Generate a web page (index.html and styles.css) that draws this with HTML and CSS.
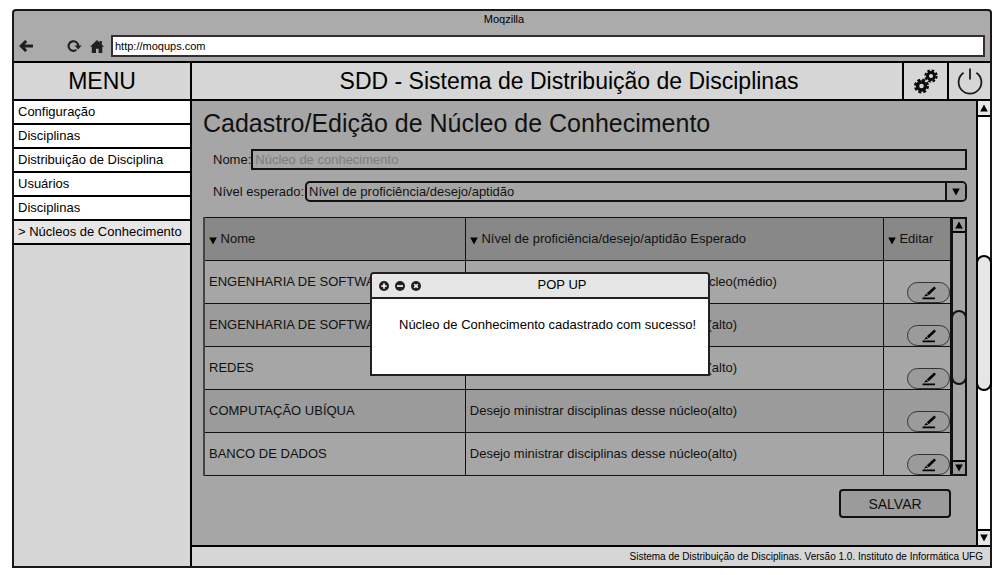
FILE: index.html
```html
<!DOCTYPE html>
<html lang="pt-BR">
<head>
<meta charset="utf-8">
<meta name="viewport" content="width=device-width, initial-scale=1">
<title>SDD - Sistema de Distribuição de Disciplinas</title>
<link rel="stylesheet" href="styles.css">
</head>
<body>
<svg class="defs" aria-hidden="true">
  <symbol id="up" viewBox="0 0 8 8"><path d="M4 0.5 7.8 7.5H0.2z"/></symbol>
  <symbol id="down" viewBox="0 0 8 8"><path d="M0.2 0.5H7.8L4 7.5z"/></symbol>
  <symbol id="pen" viewBox="0 0 14 14"><path d="M12.2 0.4 14 2.2 6.8 9.2 4.8 7.2zM4.2 7.8 6.2 9.8 2 10.6zM0.5 11.5H13V13.3H0.5z"/></symbol>
</svg>
<div class="window">
  <div class="chrome">
    <div class="chrome-title">Moqzilla</div>
    <div class="toolbar">
      <button class="icon-button back" type="button" aria-label="Voltar">
        <svg width="14" height="12" viewBox="0 0 14 12" fill="none" stroke="#231f20" stroke-width="2.9"><path d="M2 6H14M7.2 0.9 2 6 7.2 11.1"/></svg>
      </button>
      <button class="icon-button" type="button" aria-label="Recarregar">
        <svg width="15" height="12" viewBox="0 0 15 12"><path d="M9.4 9.8A4.8 4.8 0 1 1 11.2 6" fill="none" stroke="#231f20" stroke-width="2.1"/><path d="M7.6 5.4H14.6L11.1 9.6z" fill="#231f20"/></svg>
      </button>
      <button class="icon-button" type="button" aria-label="Página inicial">
        <svg width="14" height="13" viewBox="0 0 14 13" fill="#231f20"><path d="M7 0 9.6 2.4V1H11.8V4.4L14 6.8H12.3V13H8.6V8.8H6V13H1.8V6.8H0z"/></svg>
      </button>
      <input class="address" type="text" aria-label="Endereço" value="http://moqups.com">
    </div>
  </div>
  <div class="app">
    <aside class="sidebar">
      <h2 class="heading">MENU</h2>
      <nav class="menu">
        <a href="#">Configuração</a>
        <a href="#">Disciplinas</a>
        <a href="#">Distribuição de Disciplina</a>
        <a href="#">Usuários</a>
        <a href="#">Disciplinas</a>
        <a href="#" class="active" aria-current="page">&gt; Núcleos de Conhecimento</a>
      </nav>
    </aside>
    <div class="main">
      <header class="topbar">
        <h1 class="heading">SDD - Sistema de Distribuição de Disciplinas</h1>
        <button class="top-action" type="button" aria-label="Configurações">
          <svg width="24" height="25" viewBox="0 0 24 25" fill="none" stroke="#0a0a0a">
            <circle cx="7.5" cy="17" r="4" stroke-width="3.4"/>
            <circle cx="7.5" cy="17" r="6.3" stroke-width="2.4" stroke-dasharray="2.9 2.05"/>
            <circle cx="17" cy="7" r="3.5" stroke-width="2.8"/>
            <circle cx="17" cy="7" r="5.5" stroke-width="2.3" stroke-dasharray="2.5 1.82"/>
          </svg>
        </button>
        <button class="top-action power" type="button" aria-label="Sair">
          <svg width="26" height="27" viewBox="0 0 26 27" fill="none" stroke="#1c1c1c" stroke-width="1.8"><path d="M13 0.5V11.5M6.6 4.8A11.4 11.4 0 1 0 19.4 4.8"/></svg>
        </button>
      </header>
      <div class="workspace">
        <main class="content">
          <h2 class="page-title">Cadastro/Edição de Núcleo de Conhecimento</h2>
          <form class="form">
            <div class="field">
              <label for="nome">Nome:</label>
              <input id="nome" type="text" placeholder="Núcleo de conhecimento">
            </div>
            <div class="field level">
              <label for="nivel">Nível esperado:</label>
              <div class="select-box">
                <select id="nivel"><option>Nível de proficiência/desejo/aptidão</option></select>
                <span class="select-arrow"><svg width="8" height="8"><use href="#down"/></svg></span>
              </div>
            </div>
            <div class="grid">
              <table>
                <colgroup><col class="col-name"><col class="col-level"><col class="col-edit"></colgroup>
                <thead>
                  <tr>
                    <th scope="col"><svg width="8" height="8"><use href="#down"/></svg> Nome</th>
                    <th scope="col"><svg width="8" height="8"><use href="#down"/></svg> Nível de proficiência/desejo/aptidão Esperado</th>
                    <th scope="col"><svg width="8" height="8"><use href="#down"/></svg> Editar</th>
                  </tr>
                </thead>
                <tbody>
                  <tr><td>ENGENHARIA DE SOFTWARE</td><td>Não desejo ministrar disciplinas desse núcleo(médio)</td><td class="edit"><button type="button" aria-label="Editar"><svg width="14" height="14"><use href="#pen"/></svg></button></td></tr>
                  <tr><td>ENGENHARIA DE SOFTWARE</td><td>Desejo ministrar disciplinas desse núcleo(alto)</td><td class="edit"><button type="button" aria-label="Editar"><svg width="14" height="14"><use href="#pen"/></svg></button></td></tr>
                  <tr><td>REDES</td><td>Desejo ministrar disciplinas desse núcleo(alto)</td><td class="edit"><button type="button" aria-label="Editar"><svg width="14" height="14"><use href="#pen"/></svg></button></td></tr>
                  <tr><td>COMPUTAÇÃO UBÍQUA</td><td>Desejo ministrar disciplinas desse núcleo(alto)</td><td class="edit"><button type="button" aria-label="Editar"><svg width="14" height="14"><use href="#pen"/></svg></button></td></tr>
                  <tr><td>BANCO DE DADOS</td><td>Desejo ministrar disciplinas desse núcleo(alto)</td><td class="edit"><button type="button" aria-label="Editar"><svg width="14" height="14"><use href="#pen"/></svg></button></td></tr>
                </tbody>
              </table>
              <div class="scroll dimmed">
                <button type="button" aria-label="Rolar tabela para cima"><svg width="8" height="8"><use href="#up"/></svg></button>
                <div class="track"><div class="thumb"></div></div>
                <button type="button" aria-label="Rolar tabela para baixo"><svg width="8" height="8"><use href="#down"/></svg></button>
              </div>
            </div>
            <button class="save" type="button">SALVAR</button>
          </form>
        </main>
        <div class="scroll page-scroll">
          <button type="button" aria-label="Rolar página para cima"><svg width="8" height="8"><use href="#up"/></svg></button>
          <div class="track"><div class="thumb"></div></div>
          <button type="button" aria-label="Rolar página para baixo"><svg width="8" height="8"><use href="#down"/></svg></button>
        </div>
        <dialog class="popup" open aria-labelledby="popup-title">
          <div class="popup-bar">
            <div class="popup-controls">
              <button type="button" aria-label="Maximizar"><svg width="10" height="10" viewBox="0 0 10 10"><circle cx="5" cy="5" r="5" fill="#231f20"/><path d="M5 2.3V7.7M2.3 5H7.7" stroke="#fff" stroke-width="1.6"/></svg></button>
              <button type="button" aria-label="Minimizar"><svg width="10" height="10" viewBox="0 0 10 10"><circle cx="5" cy="5" r="5" fill="#231f20"/><path d="M2 5H8" stroke="#fff" stroke-width="1.6"/></svg></button>
              <button type="button" aria-label="Fechar"><svg width="10" height="10" viewBox="0 0 10 10"><circle cx="5" cy="5" r="5" fill="#231f20"/><path d="M3.2 3.2 6.8 6.8M6.8 3.2 3.2 6.8" stroke="#fff" stroke-width="1.6"/></svg></button>
            </div>
            <h3 id="popup-title">POP UP</h3>
          </div>
          <p>Núcleo de Conhecimento cadastrado com sucesso!</p>
        </dialog>
      </div>
      <footer class="footer">Sistema de Distribuição de Disciplinas. Versão 1.0. Instituto de Informática UFG</footer>
    </div>
  </div>
</div>
</body>
</html>
```
FILE: styles.css
```css
* { box-sizing: border-box; }

body {
  margin: 0;
  padding: 9px 12px 7px;
  min-height: 100vh;
  display: flex;
  background: #fff;
  color: #000;
  font: 13px/16px "Liberation Sans", Arial, sans-serif;
}

button, input, select { font: inherit; color: inherit; margin: 0; }
button { display: grid; place-items: center; padding: 0; border: 0; background: none; }
svg { display: block; }
h1, h2, h3, p { margin: 0; font-weight: normal; }
.defs { position: absolute; width: 0; height: 0; }

.window {
  flex: 1;
  min-width: 0;
  display: flex;
  flex-direction: column;
  border: 2px solid #1a1718;
  border-radius: 4px 4px 0 0;
  background: #ababab;
}

.chrome-title { font-size: 11px; line-height: 16px; text-align: center; padding-left: 4px; }
.toolbar { display: flex; align-items: center; padding: 8px 5px 4px; }
.icon-button { margin-right: 7px; }
.icon-button.back { margin-right: 34px; }
.icon-button:nth-child(2) { margin-right: 8px; }
.address {
  flex: 1;
  min-width: 0;
  height: 22px;
  padding: 0 2px;
  border: 2px solid #352d30;
  border-radius: 0;
  background: #fff;
  font-size: 11px;
}

.app { flex: 1; display: grid; grid-template-columns: 178px minmax(0, 1fr); border-top: 2px solid #000; }
.sidebar { border-right: 2px solid #000; background: #d6d6d6; }
.heading { font-size: 23px; line-height: 36px; text-align: center; }
.sidebar .heading { border-bottom: 2px solid #000; }
.menu { display: grid; }
.menu a {
  padding: 2px 4px;
  line-height: 18px;
  border-bottom: 2px solid #000;
  background: #fff;
  color: #000;
  text-decoration: none;
}
.menu .active { background: #e6e6e6; }

.main { display: flex; flex-direction: column; }
.topbar { display: flex; background: #d6d6d6; border-bottom: 2px solid #000; }
.topbar .heading { flex: 1; padding-left: 44px; padding-right: 0; }
.top-action { width: 45px; border-left: 2px solid #000; }
.power { width: 43px; }

.workspace { flex: 1; display: flex; position: relative; }
.content { flex: 1; min-width: 0; padding: 8px 9px 24px 11px; background: #a6a6a6; color: #111; }
.page-title { font-size: 25px; line-height: 28px; }

.form { display: flex; flex-direction: column; }
.field { display: flex; align-items: center; margin: 12px 0 0 10px; }
.field.level { margin-top: 11px; }
.field input {
  flex: 1;
  min-width: 0;
  height: 21px;
  padding: 0 2px;
  border: 2px solid #111;
  background: transparent;
}
.field input::placeholder { color: #7d7d7d; opacity: 1; }
.select-box { flex: 1; display: grid; margin-left: 1px; border: 2px solid #111; border-radius: 5px; }
.select-box > * { grid-area: 1 / 1; }
.select-box select { height: 17px; padding: 0 2px; border: 0; background: none; appearance: none; }
.select-arrow {
  justify-self: end;
  width: 20px;
  display: grid;
  place-items: center;
  border-left: 2px solid #111;
  background: #9b9b9b;
  border-radius: 0 3px 3px 0;
  pointer-events: none;
}

.grid { display: flex; margin-top: 15px; }
table { flex: 1; table-layout: fixed; border-collapse: collapse; border: 1px solid #111; border-left: 2px solid #444; }
.col-name { width: 35%; }
.col-level { width: 56%; }
.col-edit { width: 9%; }
th, td { height: 43px; padding: 0 4px; border: 1px solid #111; text-align: left; font-weight: normal; }
th:first-child, td:first-child { border-left: 2px solid #444; }
thead { background: #888; }
th svg { display: inline-block; margin-bottom: -2px; }
tbody tr:nth-child(even) { background: #9b9b9b; }
td.edit { padding: 0; vertical-align: bottom; }
.edit button {
  width: 43px;
  height: 21px;
  margin-left: auto;
  border: 1px solid #333;
  border-radius: 11px;
  background: #9b9b9b;
}

.scroll { width: 16px; display: flex; flex-direction: column; border: 2px solid #000; background: #fff; }
.scroll button { height: 14px; background: #e6e6e6; }
.scroll button:first-child { border-bottom: 2px solid #000; }
.scroll button:last-child { border-top: 2px solid #000; }
.track { flex: 1; display: grid; grid-template-rows: 139fr 138fr 139fr; margin: 0 -2px; }
.thumb { grid-row: 2; border: 2px solid #000; border-radius: 8px; background: #e6e6e6; }
.dimmed { border-color: #111; background: #a6a6a6; }
.dimmed button, .dimmed .thumb { background: #9b9b9b; border-color: #111; }
.dimmed .track { grid-template-rows: 77fr 75fr 75fr; }
.page-scroll { width: 14px; border-width: 0 0 0 2px; }
.page-scroll button { height: 16px; }

.save {
  align-self: flex-end;
  width: 112px;
  height: 29px;
  margin: 13px 16px 0 0;
  border: 2px solid #111;
  border-radius: 4px;
  background: #9b9b9b;
  font-size: 14px;
}

.popup {
  position: absolute;
  inset: 171px auto auto 178px;
  width: 340px;
  margin: 0;
  padding: 0;
  border: 2px solid #231f20;
  border-radius: 4px 4px 0 0;
  background: #fff;
  color: #000;
}
.popup-bar {
  display: grid;
  align-items: center;
  height: 25px;
  padding: 0 7px;
  border-bottom: 2px solid #231f20;
  border-radius: 2px 2px 0 0;
  background: #e6e6e6;
}
.popup-bar > * { grid-area: 1 / 1; }
.popup-controls { display: flex; gap: 6px; z-index: 1; }
.popup h3 { font-size: 13px; line-height: 16px; padding: 0 0 2px 44px; text-align: center; }
.popup p { padding: 18px 12px 41px; text-align: right; }

.footer {
  padding: 1px 7px 0;
  border-top: 2px solid #000;
  background: #d6d6d6;
  font-size: 10px;
  line-height: 18px;
  text-align: right;
}
```
